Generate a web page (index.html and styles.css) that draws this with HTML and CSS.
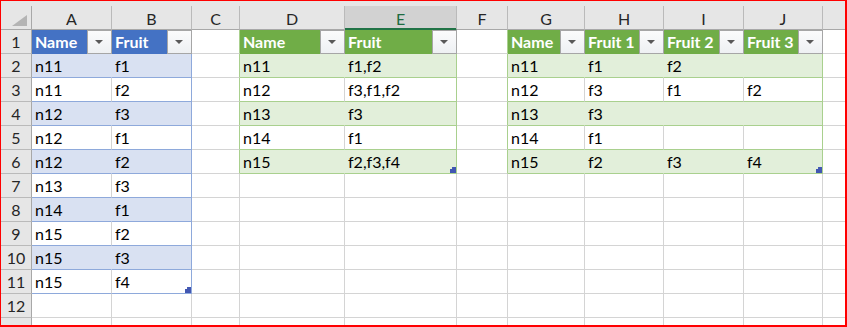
FILE: index.html
```html
<!DOCTYPE html>
<html lang="en">
<head>
<meta charset="utf-8">
<title>Fruit tables</title>
<link rel="stylesheet" href="styles.css">
</head>
<body>
<div class="frame">
  <div class="band-top"></div>
  <div class="sheet">
    <!-- column headers -->
    <div class="corner"><svg width="30" height="23" viewBox="0 0 30 23"><polygon points="26,9 26,20 11,20" fill="#b4b4b4"/></svg></div>
    <div class="col-h">A</div>
    <div class="col-h">B</div>
    <div class="col-h">C</div>
    <div class="col-h">D</div>
    <div class="col-h sel">E</div>
    <div class="col-h">F</div>
    <div class="col-h">G</div>
    <div class="col-h">H</div>
    <div class="col-h">I</div>
    <div class="col-h">J</div>
    <div class="col-h"></div>

    <!-- row 1 -->
    <div class="row-h">1</div>
    <div class="c b-head">Name<span class="dd"></span></div>
    <div class="c b-head">Fruit<span class="dd"></span></div>
    <div class="c g-edge"></div>
    <div class="c g-head">Name<span class="dd"></span></div>
    <div class="c g-head">Fruit<span class="dd"></span></div>
    <div class="c g-edge"></div>
    <div class="c g-head">Name<span class="dd"></span></div>
    <div class="c g-head">Fruit 1<span class="dd"></span></div>
    <div class="c g-head">Fruit 2<span class="dd"></span></div>
    <div class="c g-head">Fruit 3<span class="dd"></span></div>
    <div class="c"></div>

    <!-- row 2 -->
    <div class="row-h">2</div>
    <div class="c b-band">n11</div>
    <div class="c b-band last">f1</div>
    <div class="c g-edge"></div>
    <div class="c g-band">n11</div>
    <div class="c g-band last">f1,f2</div>
    <div class="c g-edge"></div>
    <div class="c g-band">n11</div>
    <div class="c g-band">f1</div>
    <div class="c g-band">f2</div>
    <div class="c g-band last"></div>
    <div class="c"></div>

    <!-- row 3 -->
    <div class="row-h">3</div>
    <div class="c b-row">n11</div>
    <div class="c b-row last">f2</div>
    <div class="c g-edge"></div>
    <div class="c g-row">n12</div>
    <div class="c g-row last">f3,f1,f2</div>
    <div class="c g-edge"></div>
    <div class="c g-row">n12</div>
    <div class="c g-row">f3</div>
    <div class="c g-row">f1</div>
    <div class="c g-row last">f2</div>
    <div class="c"></div>

    <!-- row 4 -->
    <div class="row-h">4</div>
    <div class="c b-band">n12</div>
    <div class="c b-band last">f3</div>
    <div class="c g-edge"></div>
    <div class="c g-band">n13</div>
    <div class="c g-band last">f3</div>
    <div class="c g-edge"></div>
    <div class="c g-band">n13</div>
    <div class="c g-band">f3</div>
    <div class="c g-band"></div>
    <div class="c g-band last"></div>
    <div class="c"></div>

    <!-- row 5 -->
    <div class="row-h">5</div>
    <div class="c b-row">n12</div>
    <div class="c b-row last">f1</div>
    <div class="c g-edge"></div>
    <div class="c g-row">n14</div>
    <div class="c g-row last">f1</div>
    <div class="c g-edge"></div>
    <div class="c g-row">n14</div>
    <div class="c g-row">f1</div>
    <div class="c g-row"></div>
    <div class="c g-row last"></div>
    <div class="c"></div>

    <!-- row 6 -->
    <div class="row-h">6</div>
    <div class="c b-band">n12</div>
    <div class="c b-band last">f2</div>
    <div class="c g-edge"></div>
    <div class="c g-band">n15</div>
    <div class="c g-band last">f2,f3,f4<span class="handle"></span></div>
    <div class="c g-edge"></div>
    <div class="c g-band">n15</div>
    <div class="c g-band">f2</div>
    <div class="c g-band">f3</div>
    <div class="c g-band last">f4<span class="handle"></span></div>
    <div class="c"></div>

    <!-- row 7 -->
    <div class="row-h">7</div>
    <div class="c b-row">n13</div>
    <div class="c b-row last">f3</div>
    <div class="c"></div><div class="c"></div><div class="c"></div><div class="c"></div>
    <div class="c"></div><div class="c"></div><div class="c"></div><div class="c"></div><div class="c"></div>

    <!-- row 8 -->
    <div class="row-h">8</div>
    <div class="c b-band">n14</div>
    <div class="c b-band last">f1</div>
    <div class="c"></div><div class="c"></div><div class="c"></div><div class="c"></div>
    <div class="c"></div><div class="c"></div><div class="c"></div><div class="c"></div><div class="c"></div>

    <!-- row 9 -->
    <div class="row-h">9</div>
    <div class="c b-row">n15</div>
    <div class="c b-row last">f2</div>
    <div class="c"></div><div class="c"></div><div class="c"></div><div class="c"></div>
    <div class="c"></div><div class="c"></div><div class="c"></div><div class="c"></div><div class="c"></div>

    <!-- row 10 -->
    <div class="row-h">10</div>
    <div class="c b-band">n15</div>
    <div class="c b-band last">f3</div>
    <div class="c"></div><div class="c"></div><div class="c"></div><div class="c"></div>
    <div class="c"></div><div class="c"></div><div class="c"></div><div class="c"></div><div class="c"></div>

    <!-- row 11 -->
    <div class="row-h">11</div>
    <div class="c b-row">n15</div>
    <div class="c b-row last">f4<span class="handle"></span></div>
    <div class="c"></div><div class="c"></div><div class="c"></div><div class="c"></div>
    <div class="c"></div><div class="c"></div><div class="c"></div><div class="c"></div><div class="c"></div>

    <!-- row 12 -->
    <div class="row-h">12</div>
    <div class="c"></div><div class="c"></div><div class="c"></div><div class="c"></div><div class="c"></div>
    <div class="c"></div><div class="c"></div><div class="c"></div><div class="c"></div><div class="c"></div><div class="c"></div>

    <!-- row 13 -->
    <div class="row-h">13</div>
    <div class="c"></div><div class="c"></div><div class="c"></div><div class="c"></div><div class="c"></div>
    <div class="c"></div><div class="c"></div><div class="c"></div><div class="c"></div><div class="c"></div><div class="c"></div>
  </div>
</div>
</body>
</html>
```

FILE: styles.css
```css
html, body {
  margin: 0;
  padding: 0;
  background: #fff;
}

.frame {
  width: 847px;
  height: 327px;
  box-sizing: border-box;
  border: solid #ff0000;
  border-width: 1px 2px 2px 1px;
  overflow: hidden;
  font-family: Lato, "Liberation Sans", sans-serif;
  font-size: 16px;
  color: #000;
}

.band-top {
  height: 5px;
  background: #e6e6e6;
}

.sheet {
  display: grid;
  grid-template-columns: 31px 80px 80px 48px 105px 112px 51px 77px 79px 80px 79px 80px;
  grid-auto-rows: 24px;
}

.sheet > div {
  box-sizing: border-box;
  border-right: 1px solid #d4d4d4;
  border-bottom: 1px solid #d4d4d4;
  display: flex;
  align-items: center;
  line-height: 23px;
  white-space: nowrap;
  position: relative;
}

/* headers */
.sheet > .corner,
.sheet > .col-h,
.sheet > .row-h {
  background: #e6e6e6;
  color: #262626;
  border-right-color: #bababa;
  border-bottom-color: #bababa;
}

.sheet > .corner {
  border-right-color: #a8a8a8;
  border-bottom-color: #a8a8a8;
  align-items: flex-start;
}

.corner svg {
  display: block;
}

.sheet > .col-h {
  justify-content: center;
  border-bottom-color: #a8a8a8;
  padding-top: 1px;
}

.sheet > .col-h.sel {
  background: #d2d2d2;
  color: #1e6b41;
  border-bottom-color: #217346;
  box-shadow: inset 0 -1px 0 #217346;
}

.sheet > .row-h {
  justify-content: center;
  border-right-color: #a8a8a8;
}

/* ordinary cells */
.sheet > .c {
  padding-left: 3px;
  background: #fff;
}

/* blue table */
.sheet > .b-head {
  background: #4472c4;
  color: #fff;
  font-weight: 700;
  border-right-color: #4472c4;
  border-bottom-color: #4472c4;
}

.sheet > .b-band {
  background: #d9e1f2;
  border-right-color: #d9e1f2;
  border-bottom-color: #8ea9db;
}

.sheet > .b-row {
  border-bottom-color: #8ea9db;
}

.sheet > .b-band.last,
.sheet > .b-row.last {
  border-right-color: #8ea9db;
}

/* green tables */
.sheet > .g-head {
  background: #70ad47;
  color: #fff;
  font-weight: 700;
  border-right-color: #70ad47;
  border-bottom-color: #70ad47;
}

.sheet > .g-band {
  background: #e2efda;
  border-right-color: #e2efda;
  border-bottom-color: #a9d08e;
}

.sheet > .g-row {
  border-bottom-color: #a9d08e;
}

.sheet > .g-band.last,
.sheet > .g-row.last,
.sheet > .g-edge {
  border-right-color: #a9d08e;
}

/* autofilter dropdown button */
.dd {
  position: absolute;
  top: 0;
  right: -1px;
  bottom: -1px;
  width: 25px;
  box-sizing: border-box;
  border: 1px solid #a6a6a6;
  background: linear-gradient(#fbfbfc, #eef0f3);
}

.dd::after {
  content: "";
  position: absolute;
  left: 7px;
  top: 9px;
  border-left: 4px solid transparent;
  border-right: 4px solid transparent;
  border-top: 4px solid #595959;
}

/* table resize handle */
.handle {
  position: absolute;
  right: 0;
  bottom: 0;
  width: 6px;
  height: 6px;
  background: #4257b2;
  clip-path: polygon(34% 0, 100% 0, 100% 100%, 0 100%, 0 34%, 34% 34%);
}
```
